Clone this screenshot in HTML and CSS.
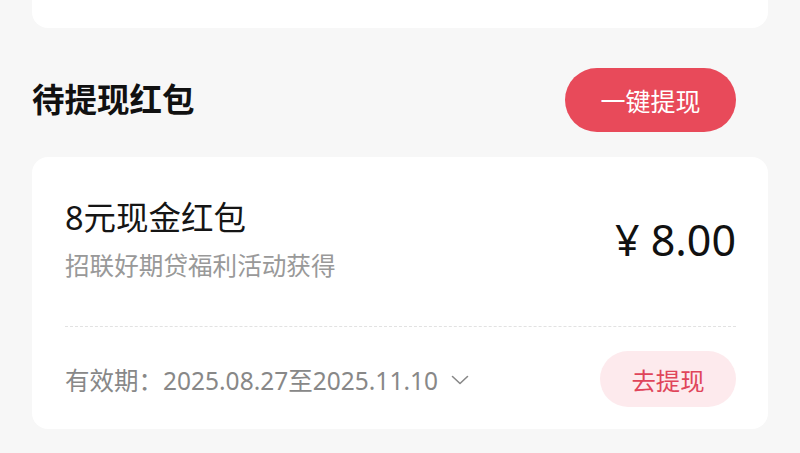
FILE: index.html
```html
<!DOCTYPE html>
<html lang="zh-CN">
<head>
    <meta charset="utf-8">
    <title>待提现红包</title>
    <meta name="viewport" content="width=device-width, initial-scale=1">
    <link rel="stylesheet" href="styles.css">
</head>
<body>
    <div class="page">
        <div class="card card-prev"></div>

        <div class="section-head">
            <h2 class="section-title">待提现红包</h2>
            <button class="btn-all">一键提现</button>
        </div>

        <div class="card packet">
            <div class="packet-main">
                <div class="packet-info">
                    <div class="packet-name">8元现金红包</div>
                    <div class="packet-from">招联好期贷福利活动获得</div>
                </div>
                <div class="packet-amount">¥ 8.00</div>
            </div>
            <div class="packet-foot">
                <div class="packet-date">
                    有效期：2025.08.27至2025.11.10
                    <svg class="chevron" width="18" height="10" viewBox="0 0 18 10">
                        <path d="M1.5 1.5 L9 8.5 L16.5 1.5" fill="none" stroke="#888" stroke-width="1.6" stroke-linecap="round" stroke-linejoin="round"/>
                    </svg>
                </div>
                <button class="btn-go">去提现</button>
            </div>
        </div>
    </div>
</body>
</html>
```

FILE: styles.css
```css
/* Base */
html, body {margin: 0; padding: 0; background: #f7f7f7}
body, button {font-family: "Noto Sans", "Noto Sans CJK SC", sans-serif}
.page {padding: 0 32px; display: flex; flex-direction: column}

/* Cards */
.card {background: #fff; border-radius: 16px}
.card-prev {height: 28px; border-radius: 0 0 16px 16px}

/* Section header */
.section-head {
    display: flex;
    align-items: center;
    justify-content: space-between;
    margin-top: 40px;
    margin-bottom: 25px;
    padding-right: 32px;
    height: 64px;
}
.section-title {
    margin: 0;
    font-size: 32.5px;
    font-weight: 700;
    color: #111;
    line-height: 1;
}
.btn-all {
    border: none;
    height: 64px;
    width: 171px;
    border-radius: 32px;
    background: #e84a5a;
    color: #fff;
    font-size: 25px;
    padding: 0;
}

/* Red packet */
.packet {padding: 38px 32px 22px 33px}
.packet-main {display: flex; align-items: center; justify-content: space-between}
.packet-info {display: flex; flex-direction: column; gap: 9px}
.packet-name {font-size: 32.5px; line-height: 45px; color: #151515}
.packet-from {font-size: 24.6px; line-height: 34px; color: #999}
.packet-amount {font-size: 43px; color: #111; line-height: 1}

.packet-foot {
    margin-top: 43px;
    padding-top: 24px;
    border-top: 1.5px dashed #e2e2e2;
    display: flex;
    align-items: center;
    justify-content: space-between;
}
.packet-date {font-size: 24.5px; color: #888; display: flex; align-items: center}
.chevron {margin-left: 13px; margin-top: 2px}
.btn-go {
    border: none;
    height: 56px;
    width: 136px;
    border-radius: 28px;
    background: #fdeaed;
    color: #e0455a;
    font-size: 24.4px;
    padding: 0;
}
```
